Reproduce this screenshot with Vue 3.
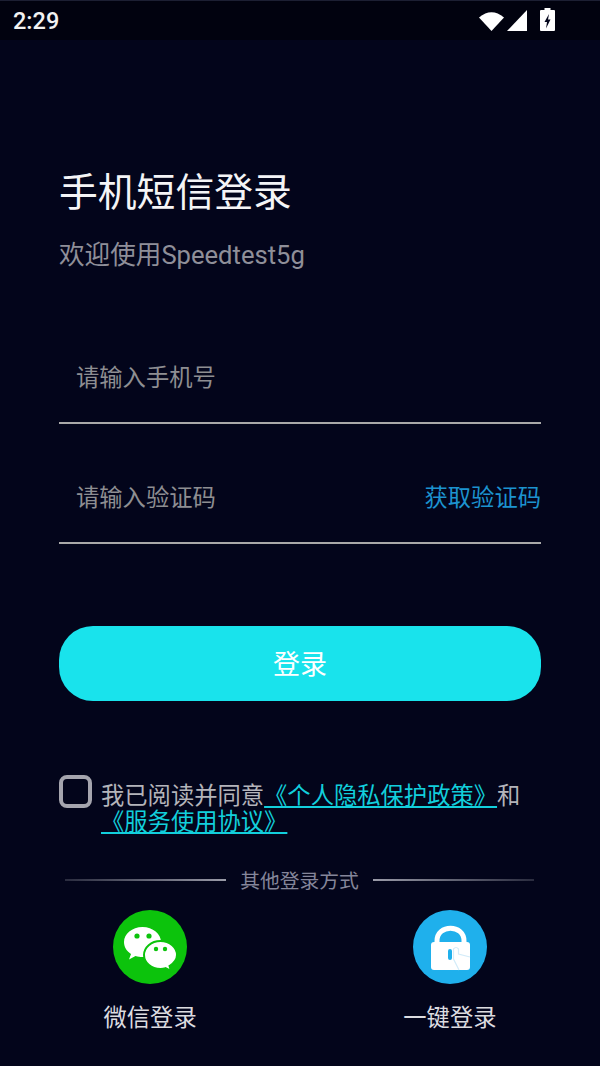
<template>
  <div class="page">
    <!-- status bar -->
    <div class="status">
      <span class="time">2:29</span>
      <div class="status-icons">
        <svg class="wifi" width="25" height="20" viewBox="0 0 25 20"><path d="M0 6.500Q12.500-4 25 6.500L12.500 20Z" fill="#fff"/></svg>
        <svg class="signal" width="20" height="21" viewBox="0 0 20 21"><path d="M20 0V21H0Z" fill="#fff"/></svg>
        <svg class="battery" width="15" height="23" viewBox="0 0 15 23">
          <path d="M4.500 0H10.500V2H14Q15 2 15 3V22Q15 23 14 23H1Q0 23 0 22V3Q0 2 1 2H4.500Z" fill="#fff"/>
          <path d="M9 6L4.500 14H7L6 20.500L10.500 11.500H8Z" fill="#03051b"/>
        </svg>
      </div>
    </div>

    <main class="content">
      <h1 class="title">手机短信登录</h1>
      <p class="subtitle">欢迎使用Speedtest5g</p>

      <div class="field phone"><span>请输入手机号</span></div>
      <div class="field">
        <span>请输入验证码</span>
        <a class="get-code">获取验证码</a>
      </div>

      <button class="login">登录</button>

      <div class="agree">
        <span class="checkbox"></span>
        <p>我已阅读并同意<a>《个人隐私保护政策》</a>和<br><a>《服务使用协议》</a></p>
      </div>

      <div class="divider">
        <i class="line left"></i>
        <span>其他登录方式</span>
        <i class="line right"></i>
      </div>

      <div class="others">
        <div class="other">
          <svg width="74" height="74" viewBox="0 0 74 74">
            <circle cx="37" cy="37" r="37" fill="#0cc30c"/>
            <path d="M29.500 17C19 17 11 24 11 32C11 37 13.500 41 18 44L16 49.500L22.500 46C25 46.700 27 47 29.500 47C40 47 48 40 48 32C48 24 40 17 29.500 17Z" fill="#fff"/>
            <path d="M47.500 31C38 31 31 37.500 31 45C31 52.500 38 59 47.500 59C49.500 59 51 58.700 52.500 58.200L58 61L56.500 56C60.500 53.500 64 50 64 45C64 37.500 57 31 47.500 31Z" fill="#fff" stroke="#0cc30c" stroke-width="2"/>
            <circle cx="24" cy="26" r="2.600" fill="#0cc30c"/>
            <circle cx="36" cy="26" r="2.600" fill="#0cc30c"/>
            <circle cx="43" cy="39" r="2.200" fill="#0cc30c"/>
            <circle cx="52" cy="39" r="2.200" fill="#0cc30c"/>
          </svg>
          <span>微信登录</span>
        </div>
        <div class="other">
          <svg width="74" height="74" viewBox="0 0 74 74">
            <circle cx="37" cy="37" r="37" fill="#1fb0ec"/>
            <path d="M24 34V31C24 14 51 14 51 31V34" fill="none" stroke="#fff" stroke-width="5"/>
            <path d="M21 32H54Q57 32 57 35V57Q57 60 54 60H21Q18 60 18 57V35Q18 32 21 32Z" fill="#fff"/>
            <rect x="35" y="39" width="4" height="11" rx="2" fill="#1fb0ec"/>
            <path d="M46 60L40.500 49V39Q43 36 45.500 39V44L57 47" fill="none" stroke="#d3ecf9" stroke-width="1.200"/>
          </svg>
          <span>一键登录</span>
        </div>
      </div>
    </main>
  </div>
</template>

<script setup>
</script>

<style>
html, body {
  margin: 0;
  background: #03051b;
}
</style>

<style scoped>
.page {
  width: 600px;
  height: 1066px;
  overflow: hidden;
  background: #03051b;
  color: #fff;
  font-family: Roboto, "Noto Sans CJK SC", sans-serif;
  box-sizing: border-box;
  border-top: 1px solid #1c1f33;
}
.status {
  height: 39px;
  background: #01020f;
  display: flex;
  align-items: center;
  justify-content: space-between;
  padding: 0 45px 0 13px;
}
.time {
  font-size: 23.500px;
  font-weight: 500;
  color: #f2f2f2;
}
.status-icons {
  display: flex;
  align-items: flex-end;
  height: 23px;
  margin-top: -2px;
}
.signal { margin-left: 3px; }
.battery { margin-left: 13px; }
.content {
  padding: 0 59px;
}
.title {
  margin: 127px 0 0;
  font-size: 38.800px;
  line-height: 52px;
  font-weight: 400;
  color: #f4f4f6;
}
.subtitle {
  margin: 19px 0 0;
  font-size: 25.600px;
  line-height: 34px;
  color: #8f8f99;
}
.field {
  height: 120px;
  border-bottom: 2px solid #a9a9a9;
  display: flex;
  align-items: center;
  justify-content: space-between;
  padding: 26px 0 0 17px;
  box-sizing: border-box;
  font-size: 23.300px;
  color: #8e8e92;
}
.phone { margin-top: 32px; }
.get-code { color: #1c93cf; }
.login {
  display: block;
  width: 482px;
  height: 75px;
  margin-top: 82px;
  padding: 0 0 2px;
  border: 0;
  border-radius: 34px;
  background: #19e3ec;
  color: #fff;
  font: inherit;
  font-size: 27px;
}
.agree {
  display: flex;
  margin-top: 74px;
  gap: 9px;
}
.checkbox {
  width: 33px;
  height: 33px;
  box-sizing: border-box;
  border: 4px solid #a5a5ae;
  border-radius: 8px;
  flex: none;
}
.agree p {
  margin: 8px 0 0;
  font-size: 23.300px;
  line-height: 26px;
  color: #b4b4ba;
  white-space: nowrap;
}
.agree a {
  color: #12cfdc;
  text-decoration: underline;
}
.divider {
  display: flex;
  align-items: center;
  justify-content: center;
  margin-top: 30px;
  gap: 14px;
  padding: 0 7px 0 6px;
  font-size: 19.800px;
  color: #85869a;
}
.line {
  flex: 1;
  height: 2px;
}
.line.left { background: linear-gradient(90deg, #2a2c3f, #9a9ba8); }
.line.right { background: linear-gradient(90deg, #9a9ba8, #2a2c3f); }
.others {
  display: flex;
  justify-content: space-between;
  margin-top: 16px;
  padding: 0 44.500px;
}
.other {
  display: flex;
  flex-direction: column;
  align-items: center;
  gap: 15px;
  font-size: 23.300px;
  color: #dcdce0;
}
</style>
